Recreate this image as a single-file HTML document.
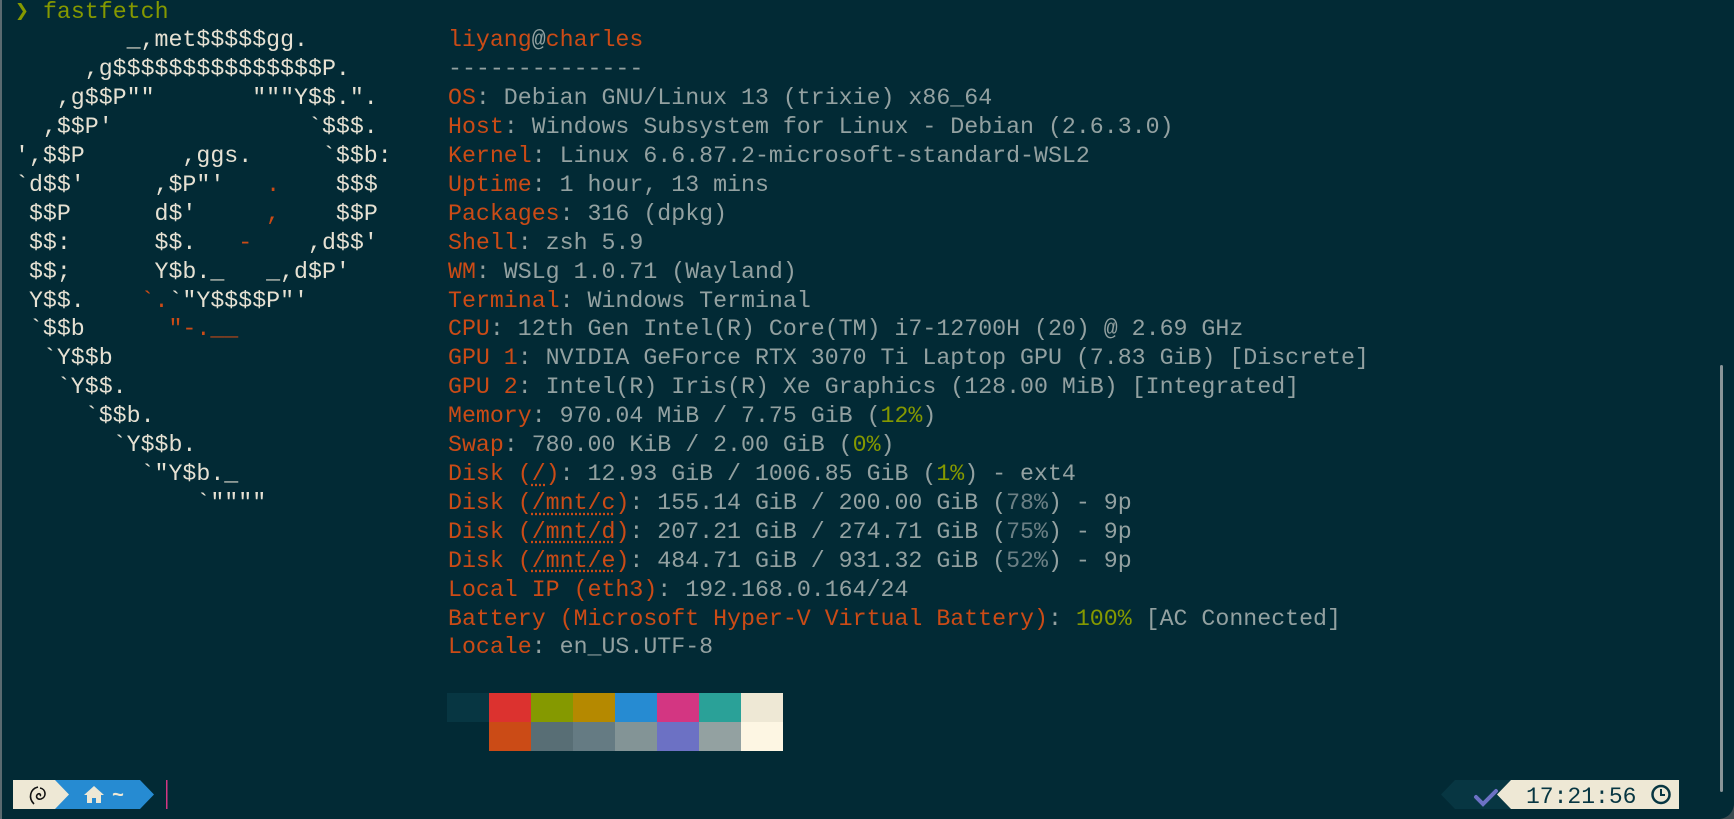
<!DOCTYPE html>
<html><head><meta charset="utf-8"><style>
html,body{margin:0;padding:0;width:1734px;height:819px;overflow:hidden;background:#022a35;}
pre{position:absolute;margin:0;font-family:"Liberation Mono","DejaVu Sans Mono",monospace;font-size:23.25px;line-height:28.9px;color:#93a1a1;}
#logo{left:15px;top:-2.5px;color:#e6e1d3;}
#info{left:448px;top:26.4px;}
.o{color:#cb4b16}.g{color:#859900}.w{color:#e6e1d3}.d{color:#6c8085}
u{text-decoration:underline dotted;text-underline-offset:4px}
.blk{position:absolute;width:42px;height:29px}
</style></head><body>
<div style="position:absolute;left:0;top:0;width:2px;height:819px;background:#5a6a70"></div>
<pre id="logo"><span class="g"><b>❯</b> fastfetch</span>
        _,met$$$$$gg.
     ,g$$$$$$$$$$$$$$$P.
   ,g$$P""       """Y$$.".
  ,$$P'              `$$$.
',$$P       ,ggs.     `$$b:
`d$$'     ,$P"'   <span class="o">.</span>    $$$
 $$P      d$'     <span class="o">,</span>    $$P
 $$:      $$.   <span class="o">-</span>    ,d$$'
 $$;      Y$b._   _,d$P'
 Y$$.    <span class="o">`.</span>`"Y$$$$P"'
 `$$b      <span class="o">"-.__</span>
  `Y$$b
   `Y$$.
     `$$b.
       `Y$$b.
         `"Y$b._
             `""""</pre>
<pre id="info"><span class="o">liyang</span>@<span class="o">charles</span>
--------------
<span class="o">OS</span>: Debian GNU/Linux 13 (trixie) x86_64
<span class="o">Host</span>: Windows Subsystem for Linux - Debian (2.6.3.0)
<span class="o">Kernel</span>: Linux 6.6.87.2-microsoft-standard-WSL2
<span class="o">Uptime</span>: 1 hour, 13 mins
<span class="o">Packages</span>: 316 (dpkg)
<span class="o">Shell</span>: zsh 5.9
<span class="o">WM</span>: WSLg 1.0.71 (Wayland)
<span class="o">Terminal</span>: Windows Terminal
<span class="o">CPU</span>: 12th Gen Intel(R) Core(TM) i7-12700H (20) @ 2.69 GHz
<span class="o">GPU 1</span>: NVIDIA GeForce RTX 3070 Ti Laptop GPU (7.83 GiB) [Discrete]
<span class="o">GPU 2</span>: Intel(R) Iris(R) Xe Graphics (128.00 MiB) [Integrated]
<span class="o">Memory</span>: 970.04 MiB / 7.75 GiB (<span class="g">12%</span>)
<span class="o">Swap</span>: 780.00 KiB / 2.00 GiB (<span class="g">0%</span>)
<span class="o">Disk (<u>/</u>)</span>: 12.93 GiB / 1006.85 GiB (<span class="g">1%</span>) - ext4
<span class="o">Disk (<u>/mnt/c</u>)</span>: 155.14 GiB / 200.00 GiB (<span class="d">78%</span>) - 9p
<span class="o">Disk (<u>/mnt/d</u>)</span>: 207.21 GiB / 274.71 GiB (<span class="d">75%</span>) - 9p
<span class="o">Disk (<u>/mnt/e</u>)</span>: 484.71 GiB / 931.32 GiB (<span class="d">52%</span>) - 9p
<span class="o">Local IP (eth3)</span>: 192.168.0.164/24
<span class="o">Battery (Microsoft Hyper-V Virtual Battery)</span>: <span class="g">100%</span> [AC Connected]
<span class="o">Locale</span>: en_US.UTF-8</pre>
<div class="blk" style="left:447px;top:693px;background:#073642"></div>
<div class="blk" style="left:489px;top:693px;background:#dc322f"></div>
<div class="blk" style="left:531px;top:693px;background:#859900"></div>
<div class="blk" style="left:573px;top:693px;background:#b58900"></div>
<div class="blk" style="left:615px;top:693px;background:#268bd2"></div>
<div class="blk" style="left:657px;top:693px;background:#d33682"></div>
<div class="blk" style="left:699px;top:693px;background:#2aa198"></div>
<div class="blk" style="left:741px;top:693px;background:#eee8d5"></div>
<div class="blk" style="left:489px;top:722px;background:#cb4b16"></div>
<div class="blk" style="left:531px;top:722px;background:#586e75"></div>
<div class="blk" style="left:573px;top:722px;background:#657b83"></div>
<div class="blk" style="left:615px;top:722px;background:#839496"></div>
<div class="blk" style="left:657px;top:722px;background:#6c71c4"></div>
<div class="blk" style="left:699px;top:722px;background:#93a1a1"></div>
<div class="blk" style="left:741px;top:722px;background:#fdf6e3"></div>

<svg style="position:absolute;left:0;top:0" width="1734" height="819">
  <polygon points="55,780 140,780 154,794.5 140,809 55,809" fill="#268bd2"/>
  <polygon points="13,780 55,780 69,794.5 55,809 13,809" fill="#eee8d5"/>
  <path d="M38,787 C30,789 28,798 34,804 M40,788 C46,789 47,797 41,799 C37,800 35,796 38,794 C40,793 41,795 40,796" stroke="#111" stroke-width="1.6" fill="none"/>
  <path d="M84,795 L94,786 L104,795 L101,795 L101,803 L96,803 L96,798 L92,798 L92,803 L87,803 L87,795 Z" fill="#eee8d5"/>
  <text x="112" y="801" font-family="Liberation Mono,monospace" font-size="20" font-weight="bold" fill="#eee8d5">~</text>
  <rect x="166" y="780" width="1.5" height="29" fill="#d33682"/>
  <polygon points="1441,794.5 1455,780 1515,780 1515,809 1455,809" fill="#073642"/>
  <polygon points="1497,794.5 1511,780 1679,780 1679,809 1511,809" fill="#eee8d5"/>
  <path d="M1476,797 L1483,804 L1496,791" stroke="#6c71c4" stroke-width="4" fill="none" stroke-linecap="round"/>
  <text x="1526" y="803" font-family="Liberation Mono,monospace" font-size="23" fill="#073642">17:21:56</text>
  <circle cx="1661" cy="794.5" r="8.5" stroke="#073642" stroke-width="2.5" fill="none"/>
  <path d="M1661,789 L1661,795 L1665,795" stroke="#073642" stroke-width="2" fill="none"/>
  <rect x="1720" y="365" width="3" height="427" rx="1.5" fill="#8a9598"/>
  <path d="M1734,805 Q1732,817 1720,819 L1734,819 Z" fill="#3a4a50"/>
</svg>
</body></html>
